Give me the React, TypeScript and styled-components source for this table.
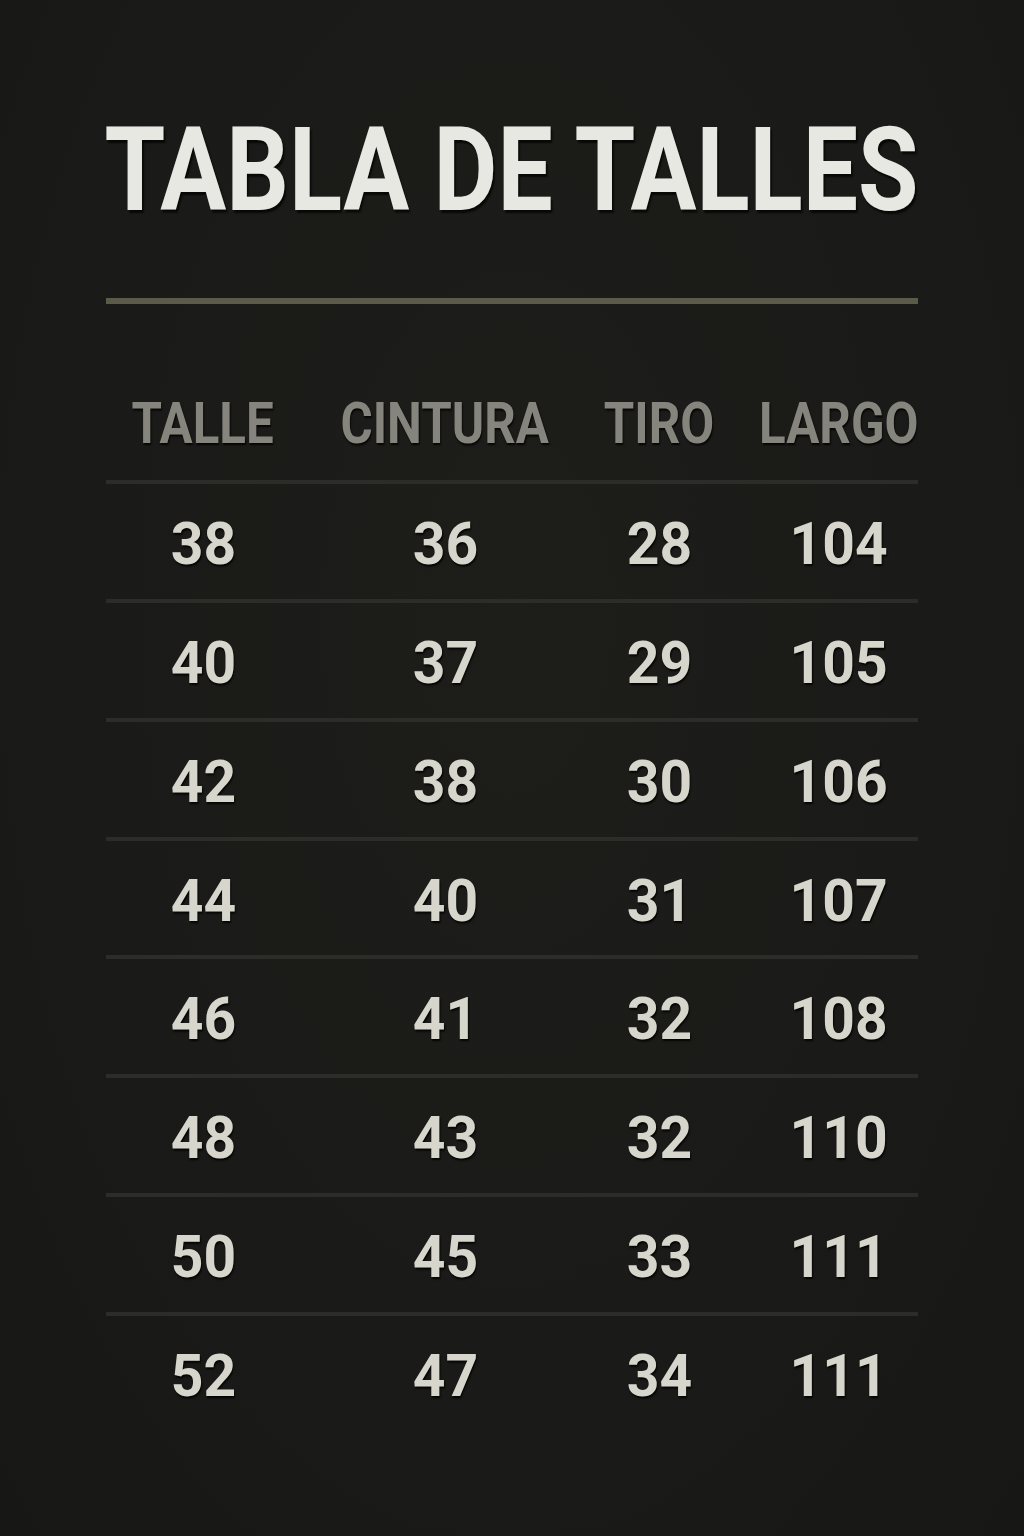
import React from "react";
import styled, { createGlobalStyle } from "styled-components";

const GlobalStyle = createGlobalStyle`
  html, body {
    margin: 0;
    padding: 0;
    background: #1a1a18;
  }
  * { box-sizing: border-box; }
`;

const Page = styled.div`
  width: 1024px;
  min-height: 1536px;
  padding: 112px 106px 0;
  background: radial-gradient(ellipse at 50% 40%, #1d1d1a 0%, #1a1a18 60%, #171715 100%);
  font-family: Roboto, "Liberation Sans", sans-serif;
`;

const Title = styled.h1`
  margin: 0;
  display: flex;
  justify-content: center;
  font-size: 117px;
  line-height: 117px;
  font-weight: 700;
  color: #e8e8e3;
  white-space: nowrap;
  text-shadow: 2px 3px 2px rgba(0, 0, 0, 0.7);
`;

const Squeeze = styled.span<{ $scale: number }>`
  display: inline-block;
  flex: none;
  transform: scaleX(${(p) => p.$scale});
  transform-origin: center;
`;

const Divider = styled.div`
  margin-top: 69px;
  height: 6px;
  background: #5a5b49;
`;

const Grid = styled.div`
  display: grid;
  grid-template-columns: 194px 290px 138px minmax(0, 1fr);
  align-items: center;
`;

const HeaderRow = styled(Grid)`
  margin-top: 90px;
  margin-bottom: 28px;
`;

const HeadCell = styled.div`
  display: flex;
  justify-content: center;
  min-width: 0;
  font-size: 58px;
  line-height: 58px;
  font-weight: 700;
  color: #85857e;
  white-space: nowrap;
  text-shadow: 1px 2px 2px rgba(0, 0, 0, 0.8);
  &:last-child {
    padding-left: 32px;
  }
`;

const Row = styled(Grid)`
  height: 118.86px;
  border-top: 4px solid #2c2c28;
  align-items: start;
  padding-top: 30px;
`;

const Cell = styled.div`
  display: flex;
  justify-content: center;
  min-width: 0;
  font-size: 60px;
  line-height: 60px;
  font-weight: 700;
  color: #d6d6cd;
  white-space: nowrap;
  text-shadow: 1px 2px 2px rgba(0, 0, 0, 0.85);
  &:last-child {
    padding-left: 32px;
  }
`;

const headers = ["TALLE", "CINTURA", "TIRO", "LARGO"];

const rows: [number, number, number, number][] = [
  [38, 36, 28, 104],
  [40, 37, 29, 105],
  [42, 38, 30, 106],
  [44, 40, 31, 107],
  [46, 41, 32, 108],
  [48, 43, 32, 110],
  [50, 45, 33, 111],
  [52, 47, 34, 111],
];

export default function App() {
  return (
    <>
      <GlobalStyle />
      <Page>
        <Title>
          <Squeeze $scale={0.84}>TABLA DE TALLES</Squeeze>
        </Title>
        <Divider />
        <HeaderRow>
          {headers.map((h) => (
            <HeadCell key={h}>
              <Squeeze $scale={0.85}>{h}</Squeeze>
            </HeadCell>
          ))}
        </HeaderRow>
        {rows.map((r, i) => (
          <Row key={i}>
            {r.map((v, j) => (
              <Cell key={j}>
                <Squeeze $scale={0.95}>{v}</Squeeze>
              </Cell>
            ))}
          </Row>
        ))}
      </Page>
    </>
  );
}
